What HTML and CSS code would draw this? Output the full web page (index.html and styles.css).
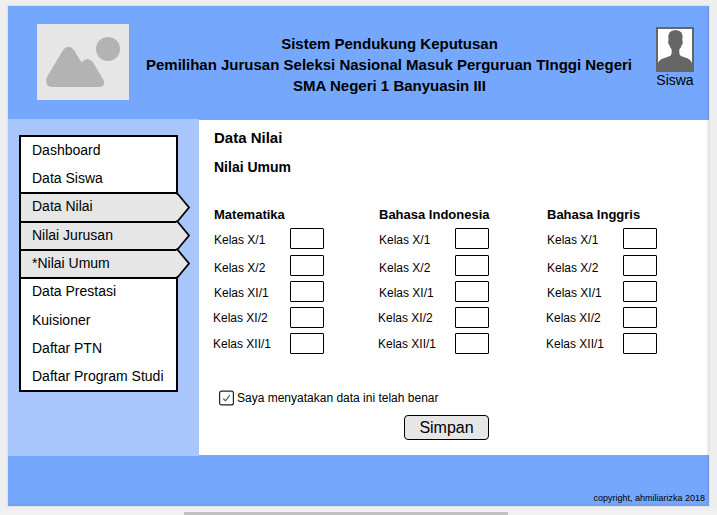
FILE: index.html
```html
<!DOCTYPE html>
<html lang="id">
<head>
<meta charset="utf-8">
<title>Data Nilai</title>
<link rel="stylesheet" href="styles.css">
</head>
<body>
<div class="page">
  <header class="header">
    <svg class="logo" width="92" height="76" viewBox="0 0 92 76">
      <rect width="92" height="76" fill="#e6e6e6"/>
      <circle cx="71" cy="25" r="12" fill="#b3b3b3"/>
      <path d="M10 53 L26 26 Q31.500 19.500 37 26 L44.500 38.500 Q50 32 55.500 37.500 L66.500 56 C68.500 60 66 63 62.500 63 H15 C10 63 8 58 10 53Z" fill="#b3b3b3"/>
    </svg>
    <h1 class="title">
      <span class="title-a">Sistem Pendukung Keputusan</span>
      <span class="title-b">Pemilihan Jurusan Seleksi Nasional Masuk Perguruan TInggi Negeri</span>
      <span class="title-c">SMA Negeri 1 Banyuasin III</span>
    </h1>
    <div class="user">
      <svg width="38" height="45" viewBox="0 0 38 45">
        <rect x="1" y="1" width="36" height="43" fill="#fff" stroke="#666" stroke-width="2"/>
        <path d="M2 43 V36 Q3 33 7 31.500 L14 29 Q16 28 15.700 22.500 Q13.700 20.500 13.300 18 Q11.500 16.500 12.500 13 Q11 3 19.500 3 Q28 3 26.300 13 Q27.500 16.500 25.700 18 Q25.300 20.500 23.300 22.500 Q23 28 25 29 L32 31.500 Q35 33 36 36 V43Z" fill="#666"/>
      </svg>
      <span>Siswa</span>
    </div>
  </header>
  <div class="body">
    <nav class="sidebar">
      <ul class="menu">
        <li>Dashboard</li>
        <li>Data Siswa</li>
        <li class="active">Data Nilai<svg class="arrow" width="15" height="31" viewBox="0 0 15 31"><path d="M0 2.500H2L13 15.500L2 28.500H0Z"/><path class="edge" d="M1 1L13 15.500L1 30"/></svg></li>
        <li class="active">Nilai Jurusan<svg class="arrow" width="15" height="31" viewBox="0 0 15 31"><path d="M0 2.500H2L13 15.500L2 28.500H0Z"/><path class="edge" d="M1 1L13 15.500L1 30"/></svg></li>
        <li class="active last">*Nilai Umum<svg class="arrow" width="15" height="31" viewBox="0 0 15 31"><path d="M0 2.500H2L13 15.500L2 28.500H0Z"/><path class="edge" d="M1 1L13 15.500L1 30"/></svg></li>
        <li>Data Prestasi</li>
        <li class="low">Kuisioner</li>
        <li class="low">Daftar PTN</li>
        <li>Daftar Program Studi</li>
      </ul>
    </nav>
    <main class="content">
      <h2>Data Nilai</h2>
      <h3>Nilai Umum</h3>
      <div class="subjects">
        <section>
          <h4>Matematika</h4>
          <div class="grades">
            <div class="labels"><span>Kelas X/1</span><span>Kelas X/2</span><span>Kelas XI/1</span><span>Kelas XI/2</span><span>Kelas XII/1</span></div>
            <div class="fields"><i></i><i></i><i></i><i></i><i></i></div>
          </div>
        </section>
        <section>
          <h4>Bahasa Indonesia</h4>
          <div class="grades">
            <div class="labels"><span>Kelas X/1</span><span>Kelas X/2</span><span>Kelas XI/1</span><span>Kelas XI/2</span><span>Kelas XII/1</span></div>
            <div class="fields"><i></i><i></i><i></i><i></i><i></i></div>
          </div>
        </section>
        <section>
          <h4>Bahasa Inggris</h4>
          <div class="grades">
            <div class="labels"><span>Kelas X/1</span><span>Kelas X/2</span><span>Kelas XI/1</span><span>Kelas XI/2</span><span>Kelas XII/1</span></div>
            <div class="fields"><i></i><i></i><i></i><i></i><i></i></div>
          </div>
        </section>
      </div>
      <label class="confirm">
        <svg width="15" height="16" viewBox="0 0 15 16"><rect x=".6" y="1.100" width="13.800" height="13.800" rx="2" fill="#fff" stroke="#222" stroke-width="1.200"/><path d="M4.300 8.500L6.500 10.800L10.800 5.200" fill="none" stroke="#555" stroke-width="1.100"/></svg>
        <span>Saya menyatakan data ini telah benar</span>
      </label>
      <button class="save">Simpan</button>
    </main>
  </div>
  <footer class="footer">copyright, ahmiliarizka 2018</footer>
</div>
<div class="scrollbar"><div class="thumb"></div></div>
</body>
</html>
```
FILE: styles.css
```css
* { box-sizing: border-box; }
body {
  margin: 0;
  height: 515px;
  overflow: hidden;
  padding-top: 6px;
  background: #eee;
  color: #000;
  font-family: "Liberation Sans", Arial, sans-serif;
}
h1, h2, h3, h4, ul { margin: 0; padding: 0; }
.page {
  position: relative;
  width: 701px;
  height: 500px;
  margin-left: 8px;
  background: #fff;
  outline: 1px solid #e2e2e2;
}
.page::after {
  content: "";
  position: absolute;
  inset: 0;
  border-right: 2px solid rgba(0, 0, 0, .07);
  border-bottom: 2px solid rgba(0, 0, 0, .04);
}
.header {
  display: flex;
  height: 113px;
  background: #75a8fc;
}
.logo { display: block; flex: none; margin: 18px 0 0 29px; }
.title {
  display: flex;
  flex-direction: column;
  align-items: center;
  width: 520px;
  margin-top: 27px;
  font-size: 15px;
  line-height: 21px;
  white-space: nowrap;
}
.title-a, .title-c { padding-left: 1px; }
.user {
  display: flex;
  flex-direction: column;
  align-items: center;
  width: 38px;
  margin: 21px 0 0 7px;
  font-size: 14px;
  line-height: 16px;
}
.body { display: flex; height: 337px; background: #75a8fc; }
.sidebar { width: 191px; padding: 16px 0 0 11px; background: #a8c6fc; }
.menu {
  display: grid;
  grid-template-rows: repeat(9, 28.2px);
  width: 159px;
  height: 257px;
  border: 2px solid #000;
  background: #fff;
  list-style: none;
  font-size: 14px;
  line-height: 26.4px;
}
.menu li { position: relative; padding-left: 11px; white-space: nowrap; }
.menu .low { line-height: 28px; }
.menu .active { background: #e6e6e6; }
.menu .active::before, .menu .last::after {
  content: "";
  position: absolute;
  left: 0;
  right: 0;
  top: -1px;
  height: 2px;
  background: #000;
}
.menu .last::after { top: auto; bottom: -1px; }
.arrow { position: absolute; left: 155px; top: -1.4px; fill: #e6e6e6; }
.arrow .edge { fill: none; stroke: #000; stroke-width: 1.8; }
.content {
  width: 510px;
  height: 335px;
  margin-top: 1px;
  padding: 9px 0 0 15px;
  background: #fff;
}
h2 { font-size: 15px; line-height: 18px; }
h3 { margin-top: 12px; font-size: 14px; line-height: 17px; }
h4 { font-size: 13px; line-height: 16px; white-space: nowrap; }
.subjects { display: grid; grid-template-columns: 165px 168px 120px; margin-top: 31px; }
.grades { display: flex; }
.labels {
  display: flex;
  flex-direction: column;
  width: 76px;
  padding-top: 10px;
  font-size: 12px;
  line-height: 14px;
}
.labels span:nth-child(2) { margin-top: 14px; }
.labels span:nth-child(3) { margin-top: 11px; }
.labels span:nth-child(4) { margin: 11px 0 0 -1px; }
.labels span:nth-child(5) { margin: 12px 0 0 -1px; }
.fields {
  display: grid;
  grid-template-rows: 27px repeat(4, 26px);
  padding-top: 5px;
}
.fields i { width: 34px; height: 21px; border: 1px solid #000; border-radius: 1px; }
.confirm {
  display: flex;
  gap: 3px;
  margin: 31px 0 0 5px;
  font-size: 12px;
  line-height: 17px;
  height: 16px;
}
.save {
  display: block;
  width: 85px;
  height: 25px;
  margin: 9px 0 0 190px;
  padding: 1px 0 0;
  border: 1px solid #000;
  border-radius: 4px;
  background: #e6e6e6;
  color: #000;
  font: 16px/22px "Liberation Sans", Arial, sans-serif;
}
.footer {
  height: 50px;
  padding: 37px 4px 0 0;
  background: #75a8fc;
  font-size: 9px;
  line-height: 10px;
  text-align: right;
}
.scrollbar { height: 5px; margin-top: 4px; padding-top: 2px; background: #f1f1f1; }
.thumb { width: 324px; height: 3px; margin-left: 184px; background: #c1c1c1; }
```
